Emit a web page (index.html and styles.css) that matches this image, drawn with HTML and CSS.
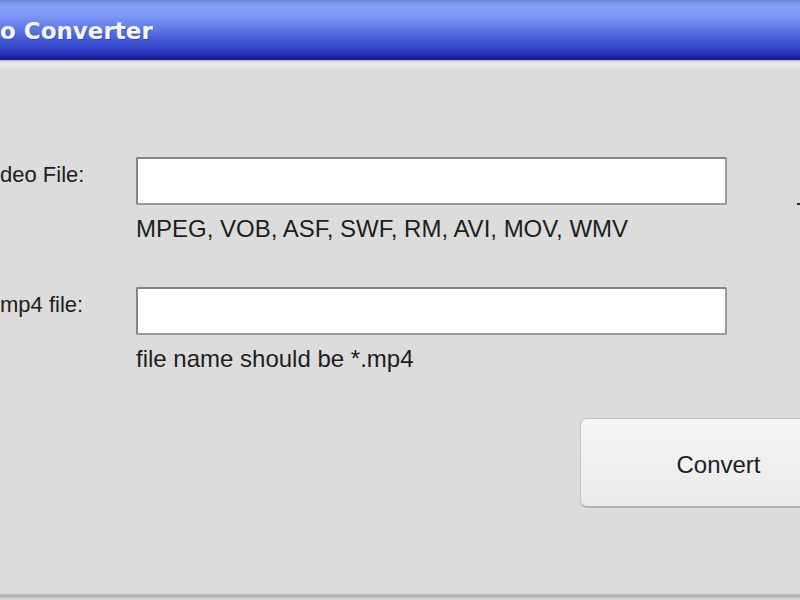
FILE: index.html
```html
<!DOCTYPE html>
<html lang="en">
<head>
<meta charset="utf-8">
<title>Video Converter</title>
<link rel="stylesheet" href="styles.css">
</head>
<body>
<div class="window">
  <header class="titlebar">
    <span class="title">o Converter</span>
  </header>
  <div class="titlebar-edge"></div>
  <main class="content">
    <div class="row">
      <label class="label">deo File:</label>
      <div class="field">
        <div class="input"></div>
        <div class="hint">MPEG, VOB, ASF, SWF, RM, AVI, MOV, WMV</div>
      </div>
      <span class="browse-mark"></span>
    </div>
    <div class="row row-second">
      <label class="label">mp4 file:</label>
      <div class="field">
        <div class="input"></div>
        <div class="hint">file name should be *.mp4</div>
      </div>
    </div>
    <div class="actions">
      <button class="button">Convert</button>
    </div>
  </main>
  <div class="bottom-edge"></div>
</div>
</body>
</html>
```

FILE: styles.css
```css
html, body {
  margin: 0;
  padding: 0;
}

body {
  width: 800px;
  height: 600px;
  overflow: hidden;
  background: #dcdcdc;
  font-family: "Liberation Sans", Arial, sans-serif;
  color: #1e1e1e;
}

.window {
  display: flex;
  flex-direction: column;
  height: 600px;
  width: 800px;
  overflow: hidden;
}

.titlebar {
  height: 60px;
  flex: 0 0 60px;
  box-sizing: border-box;
  padding-top: 18px;
  background: linear-gradient(to bottom,
    #6c82d6 0px,
    #7a93ec 3px,
    #85a0fb 8px,
    #809bf7 14px,
    #6b85ec 24px,
    #5168dd 34px,
    #3c50d0 44px,
    #2c3ac2 51px,
    #2430b2 55px,
    #1c2298 57px,
    #151a86 60px);
}

.title {
  display: block;
  font-family: "DejaVu Sans", sans-serif;
  font-weight: bold;
  font-size: 23px;
  line-height: 27px;
  color: #f4f6ff;
  text-shadow: 1px 1px 0 rgba(20, 30, 110, 0.35);
  white-space: nowrap;
}

.titlebar-edge {
  height: 9px;
  flex: 0 0 9px;
  background: linear-gradient(to bottom,
    #a6a8d6 0px,
    #c9c9dc 1px,
    #e6e6df 2px,
    #e8e8e1 6px,
    #dcdcdc 9px);
}

.content {
  flex: 1 1 auto;
  padding-top: 88px;
}

.row {
  display: grid;
  grid-template-columns: 136px 591px 1fr;
  align-items: start;
}

.row-second {
  margin-top: 44px;
}

.label {
  font-size: 22px;
  line-height: 26px;
  margin-top: 5px;
  color: #202020;
  white-space: nowrap;
}

.field {
  display: flex;
  flex-direction: column;
}

.input {
  height: 48px;
  box-sizing: border-box;
  background: #ffffff;
  border: 2px solid #858585;
  border-right-color: #9a9a9a;
  border-bottom-color: #9a9a9a;
  border-radius: 2px;
}

.hint {
  margin-top: 10px;
  font-size: 24px;
  line-height: 28px;
  color: #1e1e1e;
  white-space: nowrap;
}

.browse-mark {
  justify-self: end;
  width: 3px;
  height: 2px;
  margin-top: 46px;
  background: #2a2a2a;
}

.actions {
  margin-top: 45px;
  padding-left: 580px;
  display: flex;
}

.button {
  flex: 0 0 277px;
  width: 277px;
  height: 90px;
  padding: 4px 0 0 0;
  box-sizing: border-box;
  border: 1px solid #c4c4c4;
  border-bottom: 2px solid #b4b4b4;
  border-radius: 7px;
  background: linear-gradient(to bottom, #f4f4f4 0%, #efefef 60%, #e9e9e9 100%);
  font-family: "Liberation Sans", Arial, sans-serif;
  font-size: 24px;
  line-height: 28px;
  color: #1e1e1e;
  text-align: center;
}

.bottom-edge {
  height: 6px;
  flex: 0 0 6px;
  background: linear-gradient(to bottom,
    #c2c2c2 0px,
    #aeaeae 2px,
    #b4b4b4 3px,
    #d2d2d2 4px,
    #d6d6d6 6px);
}
```
